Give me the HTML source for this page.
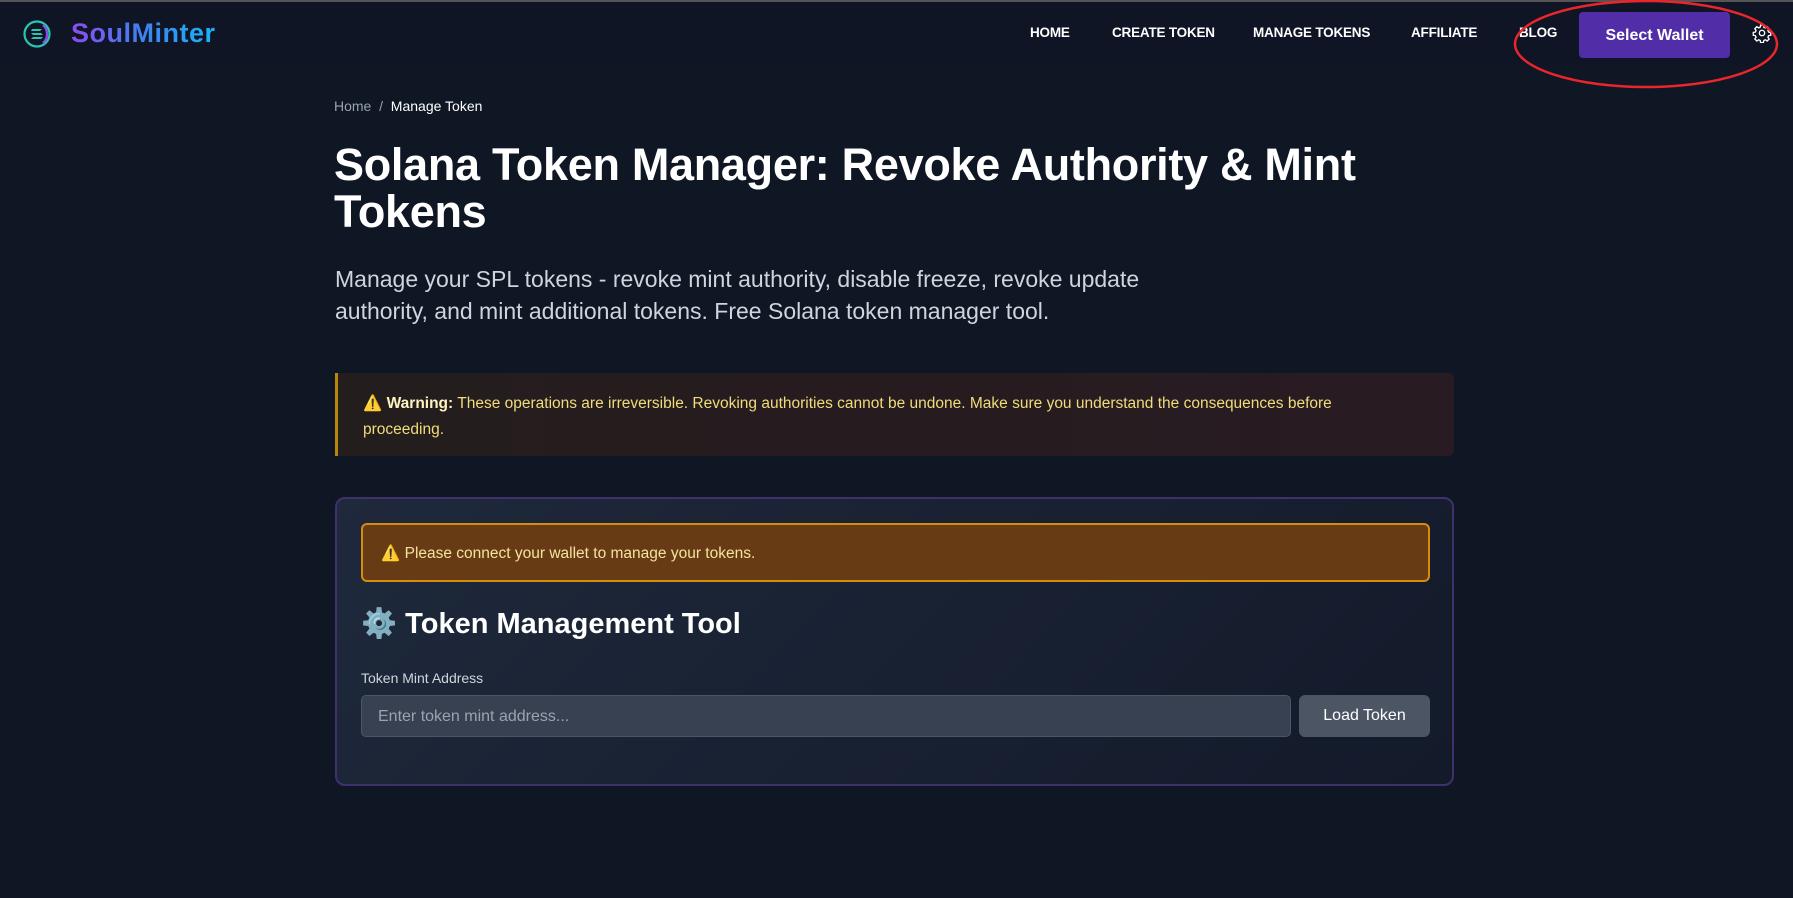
<!DOCTYPE html>
<html><head><meta charset="utf-8"><style>
*{margin:0;padding:0;box-sizing:border-box}
body{width:1793px;height:898px;overflow:hidden;background:#0f1624;font-family:"Liberation Sans",sans-serif;color:#fff;position:relative}
.top{position:absolute;top:0;left:0;width:1793px;height:2px;background:#555}
.nav{position:absolute;top:2px;left:0;width:1793px;height:64px;background:#0f1524}
.logo{position:absolute;left:71px;top:16px;font-size:27px;font-weight:bold;letter-spacing:0.5px;background:linear-gradient(90deg,#8b4cf0,#3f82f0,#18b6f5);-webkit-background-clip:text;color:transparent}
.nl{position:absolute;top:23px;font-size:13.5px;font-weight:bold;color:#fff;letter-spacing:-0.2px}
.btn{position:absolute;left:1579px;top:10px;width:151px;height:46px;background:#512da8;border-radius:4px;font-weight:bold;font-size:16px;text-align:center;line-height:47px}
.crumb{position:absolute;left:334px;top:98px;font-size:14px;color:#9aa3b2}
.crumb b{font-weight:normal;color:#fff}
h1{position:absolute;left:334px;top:141px;font-size:45px;line-height:47px;font-weight:bold;width:1120px;letter-spacing:-0.3px}
.sub{position:absolute;left:335px;top:263px;font-size:23px;line-height:32px;color:#d0d5dd;width:880px}
.warn{position:absolute;left:335px;top:373px;width:1119px;height:83px;border-left:3px solid #b8860b;border-radius:0 6px 6px 0;background:linear-gradient(90deg,#241d1d,#281b22);padding:18px 90px 0 25px;font-size:15.5px;line-height:26px;color:#f1dc7a}
.card{position:absolute;left:335px;top:497px;width:1119px;height:289px;border:2px solid #41306e;border-radius:10px;background:linear-gradient(135deg,#1e293b,#131a2a)}
.alert{position:absolute;left:24px;top:24px;width:1069px;height:59px;background:#673c15;border:2px solid #d48d0f;border-radius:6px;font-size:15.5px;color:#f6e2a0;padding:19px 0 0 18px}
.h2{position:absolute;left:24px;top:108px;font-size:29px;font-weight:bold}
.lbl{position:absolute;left:24px;top:171px;font-size:14px;color:#d0d5dd}
.inp{position:absolute;left:24px;top:196px;width:930px;height:42px;background:#374151;border:1px solid #4b5563;border-radius:5px;font-size:16px;color:#9ca3af;padding:12px 0 0 16px}
.lb{position:absolute;left:962px;top:196px;width:131px;height:42px;background:#4b5563;border-radius:6px;font-size:16px;text-align:center;line-height:42px;color:#fff}
</style></head><body>
<div class="top"></div>
<div class="nav">
<svg style="position:absolute;left:23px;top:18px" width="28" height="28" viewBox="0 0 28 28"><circle cx="14" cy="14" r="12.5" fill="none" stroke="#2bc4b0" stroke-width="2.2"/><path d="M20 5a12 12 0 0 1 0 18" stroke="#8b4cf0" stroke-width="2.2" fill="none"/><path d="M9 9h10l-2 2H8zM8 13h10l2 2H10zM10 17h10l-2 2H8z" fill="#2bc4b0"/></svg>
<div class="logo">SoulMinter</div>
<div class="nl" style="left:1030px">HOME</div>
<div class="nl" style="left:1112px">CREATE TOKEN</div>
<div class="nl" style="left:1253px">MANAGE TOKENS</div>
<div class="nl" style="left:1411px">AFFILIATE</div>
<div class="nl" style="left:1519px">BLOG</div>
<div class="btn">Select Wallet</div>
<svg style="position:absolute;left:1752px;top:21px" width="20" height="20" viewBox="0 0 24 24" fill="none" stroke="#fff" stroke-width="1.6"><circle cx="12" cy="12" r="3.2"/><path d="M10.3 2.5h3.4l.5 2.6 1.8.8 2.2-1.5 2.4 2.4-1.5 2.2.8 1.8 2.6.5v3.4l-2.6.5-.8 1.8 1.5 2.2-2.4 2.4-2.2-1.5-1.8.8-.5 2.6h-3.4l-.5-2.6-1.8-.8-2.200 1.5-2.4-2.4 1.5-2.2-.8-1.8-2.6-.5v-3.4l2.6-.5.8-1.8-1.5-2.2 2.4-2.4 2.2 1.5 1.8-.8z"/></svg>
</div>
<svg style="position:absolute;left:1508px;top:0" width="276" height="92"><ellipse cx="138" cy="44" rx="131" ry="43" fill="none" stroke="#e8262b" stroke-width="2.5"/></svg>
<div class="crumb">Home &nbsp;/&nbsp; <b>Manage Token</b></div>
<h1>Solana Token Manager: Revoke Authority &amp; Mint Tokens</h1>
<div class="sub">Manage your SPL tokens - revoke mint authority, disable freeze, revoke update authority, and mint additional tokens. Free Solana token manager tool.</div>
<div class="warn">⚠️ <b style="color:#fff3c0">Warning:</b> These operations are irreversible. Revoking authorities cannot be undone. Make sure you understand the consequences before proceeding.</div>
<div class="card">
<div class="alert">⚠️ Please connect your wallet to manage your tokens.</div>
<div class="h2">⚙️ Token Management Tool</div>
<div class="lbl">Token Mint Address</div>
<div class="inp">Enter token mint address...</div>
<div class="lb">Load Token</div>
</div>
</body></html>
